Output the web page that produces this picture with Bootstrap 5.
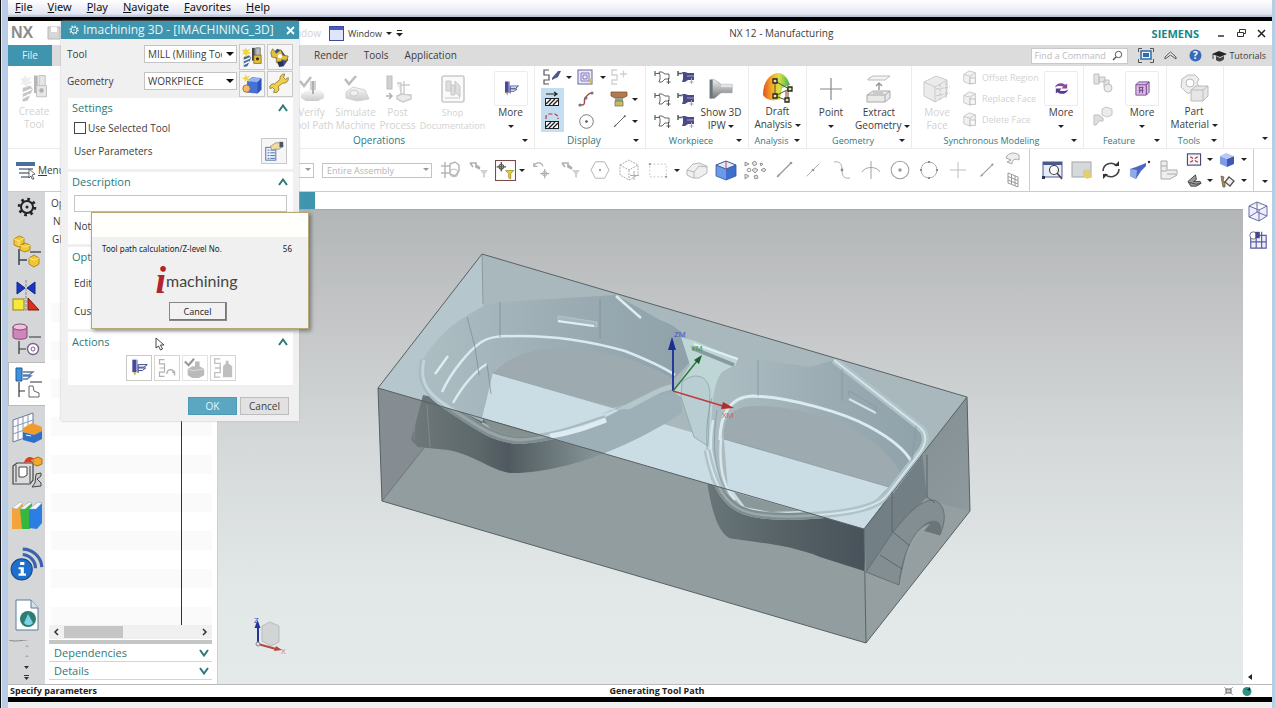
<!DOCTYPE html>
<html lang="en">
<head>
<meta charset="utf-8">
<meta name="viewport" content="width=device-width, initial-scale=1">
<title>NX 12 - Manufacturing</title>
<link href="https://cdn.jsdelivr.net/npm/bootstrap@5.3.0/dist/css/bootstrap.min.css" rel="stylesheet">
<script src="https://cdn.jsdelivr.net/npm/bootstrap@5.3.0/dist/js/bootstrap.bundle.min.js"></script>
<style>
:root{--teal:#3f94ae;--ink:#3c3c3c;--green:#2b7a78}
body{font-family:"Open Sans","Noto Sans",sans-serif;font-size:10px;line-height:13px;color:var(--ink);background:#f0f0f0;overflow:hidden}
button,a{color:inherit;text-decoration:none;font:inherit}
button{border:0;background:none;padding:0}
svg{display:block;flex:none}
.edge-l{width:8px;background:linear-gradient(90deg,#111 0 1px,#e8eef6 1px 2px,#b9cde6 2px)}
.edge-r{width:3px;background:#b6cfe4}
.menubar{height:17px;font-family:"Noto Sans",sans-serif;font-size:11px;line-height:14px;color:#111;background:linear-gradient(#fff,#e3e6f2 14px,#b9c4d6 16px);padding-left:7px;gap:15px}
.menubar a::first-letter{text-decoration:underline}
.band-t{height:4px;background:#000}
.band-b{height:5px;background:#000}
.foot{height:6px;background:#f0f0f0}
.titlebar{height:24px;background:#fff}
.nxlogo{width:27px;font:bold 16px/20px "Liberation Sans",sans-serif;color:#8c8c8c;margin-left:3px}
.brand{color:#16868a;font-size:11px;font-weight:700;margin:0 18px 0 48px}
.tabbar{height:21px;background:#dcdcdc}
.filetab{width:44px;background:var(--teal);color:#e6f3f7;text-align:center}
.tab-b{font-size:10px}
.findbox{width:97px;height:16px;border:1px solid #c9c9c9;background:#fff}
.findbox input{border:0;outline:0;background:none;font-size:9px;width:78px;padding:0 2px;color:#777}
.findbox input::placeholder{color:#bcbcbc;opacity:1}
.caret{width:0;height:0;border:3px solid transparent;border-top:3px solid #222;border-bottom:0;display:inline-block;vertical-align:middle;flex:none}
.ribbon{height:83px;background:#fff;border-bottom:1px solid #ececec}
.rgroup{border-right:1px solid #ececec;flex:none}
.rbody{height:67px}
.rlabel{height:15px;color:#32787f}
.rlabel span.caret{margin-right:6px}
.big{text-align:center;padding-top:4px;flex:none;white-space:nowrap}
.big .pic{height:35px;display:flex;align-items:center;justify-content:center}
.ghost{color:#d2d2d2}
.ghost svg,.pale{opacity:.38;filter:grayscale(1)}
.soft svg{opacity:.6}
.framed{border:1px solid #ececec;border-radius:2px;width:34px;margin:auto}
.igrid{display:grid;grid-template-rows:repeat(3,22px);align-items:center;justify-items:center}
.on{background:#c3def0;width:23px;height:22px;display:flex;align-items:center;justify-content:center}
.w-op{width:307px}.w-di{width:111px}.w-wp{width:103px}.w-an{width:58px}.w-ge{width:105px}.w-sy{width:172px}.w-fe{width:83px}.w-to{width:57px}
.selbar{height:43px;background:#fff;border-bottom:1px solid #ccc}
.tool{width:29px;flex:none;display:flex;justify-content:center}
.tool.narrow{width:24px}
.gapc{width:10px;text-align:center;display:flex;justify-content:center;flex:none}
.pick{position:relative;display:block;flex:none}
.pick select{appearance:none;width:100%;height:100%;border:1px solid #c4c4c4;background:#fff;padding:0 14px 0 3px;font-size:10px;line-height:14px;color:var(--ink);border-radius:0;display:block}
.pick::after{content:"";position:absolute;right:3px;top:50%;margin-top:-2px;border:4px solid transparent;border-top:4px solid #111;border-bottom:0}
.pick.dim select{color:#b5b5b5}
.pick.dim::after{border-top-color:#999;border-width:3px;border-bottom:0}
.resbar{width:37px;background:#d5d6d8}
.resbar button{height:44px;display:flex;align-items:center;justify-content:center;width:37px}
.resbar .sel{background:#fff;border:1px solid #bbb;border-right:0}
.navi{width:173px;background:#fff;border-right:1px solid #cfcfcf}
.rowlist{background:repeating-linear-gradient(#fff 0 19px,#fafafa 19px 38px);margin:0 5px 0 6px;flex:1}
.rowlist .split{width:131px;border-right:1px solid #333;height:100%}
.hscroll{height:14px;background:#f0f0f0;margin:0 5px 0 4px}
.hscroll i{width:59px;background:#c5c5c5;height:12px;margin-left:5px}
.fold{height:18px;margin:0 5px 0 4px;border-bottom:1px solid #ccd9db;color:var(--green);font-size:11px;line-height:16px;padding:0 3px 0 5px}
.strip{height:18px;background:#fff;border-bottom:1px solid #8fb3bb}
.strip i{width:97px;background:var(--teal)}
.scene{background:linear-gradient(#b3b6b7,#c3c5c6 22%,#d5d9d9 50%,#e2e7e7 80%,#e4e9e9);flex:1;min-height:0}
.scene svg{width:100%;height:100%}
.rtools{width:29px;background:#fff}
.status{height:13px;background:#fff;border-top:1px solid #bbb;font-size:9px;line-height:12px;font-weight:700;color:#222}
.dlg{position:absolute;left:61px;top:21px;width:238px;background:#f0f0f0;box-shadow:0 0 2px #bbb;z-index:3}
.dlg h1{height:18px;background:var(--teal);color:#eaf6fa;font-size:12px;line-height:18px;margin:0;font-weight:400}
.dlg .sq{width:26px;height:26px;border:1px solid #c8c8c8;background:#f6f6f6;display:flex;align-items:center;justify-content:center;flex:none}
.frow{display:flex;gap:2px;margin:0 5px 1px 6px}
.frow label{width:75px;line-height:20px;flex:none}
.frow .pick{width:93px;height:18px;margin-top:1px}
.panel{background:#fff;margin:0 6px 3px 7px;padding:0 6px}
.panel h2{font-size:11px;line-height:20px;margin:0 -2px;color:var(--green);font-weight:400;padding-right:1px}
.dlg label,.dlg .t{font-size:10px}
.dlg input[type=checkbox]{appearance:none;width:12px;height:12px;border:1px solid #444;margin:0;background:#fff}
.desc{width:213px;height:17px;border:1px solid #c4c4c4}
.okb{width:49px;height:18px;background:#5ba6c1;color:#e9f6fb;border:1px solid #4c9ab6}
.cab{width:49px;height:18px;background:#e1e1e1;border:1px solid #bdbdbd}
.prog{position:absolute;left:91px;top:212px;width:218px;height:117px;background:#f0f0f0;border:1px solid #b7a678;box-shadow:2px 2px 4px #0006;z-index:4;color:#222;font-size:9px}
.prog .cap{height:24px;background:#fffffb}
.prog .line{font-family:"Noto Sans",sans-serif;font-size:8px;line-height:12px}
.im-i{font:italic bold 38px/26px "Liberation Serif",serif;color:#b3232c}
.im-t{font:16px/25px "Lato",sans-serif;color:#444}
.prog .cbtn{width:58px;height:19px;background:#f2f2f2;border:1px solid #888;box-shadow:inset -1px -1px #777}
.ptr{position:absolute;left:155px;top:337px;z-index:5}
</style>
</head>
<body>
<svg width="0" height="0" class="position-absolute" aria-hidden="true">
<defs>
<linearGradient id="gr" x2="0" y2="1"><stop offset="0" stop-color="#eee"/><stop offset="1" stop-color="#777"/></linearGradient>
<linearGradient id="hot"><stop offset="0" stop-color="#e2501e"/><stop offset=".35" stop-color="#f4b028"/><stop offset=".6" stop-color="#d8e04a"/><stop offset="1" stop-color="#3cae4a"/></linearGradient>
<symbol id="gear" viewBox="0 0 20 20"><circle cx="10" cy="10" r="6" fill="none" stroke="currentColor" stroke-width="2"/><circle cx="10" cy="10" r="7.8" fill="none" stroke="currentColor" stroke-width="3" stroke-dasharray="2.6 3.53"/><circle cx="10" cy="10" r="1.5" fill="currentColor"/></symbol>
<symbol id="up" viewBox="0 0 10 8"><path d="M1 7 5 1.5 9 7" fill="none" stroke="currentColor" stroke-width="2"/></symbol>
<symbol id="drill" viewBox="0 0 24 24"><path d="M3 12l6-2 2 3-4 9-4 1z" fill="#4a6a9a"/><path d="M3 16l7-3M3 20l6-3" stroke="#fff" stroke-width="1.500"/><path d="M5 1l1 3 4-1-2 3 3 2-4 1-1 3-2-3-3 0 2-2-2-3 3 0z" fill="#f1d542"/><path d="M12 2h3v14h-3z" fill="#444"/><path d="M16 2h5v16h-5z" fill="#b9bcc0" stroke="#555" stroke-width=".7"/><path d="M14 10h8v9h-8z" fill="#e9c136" stroke="#77601a" stroke-width=".8"/><circle cx="18" cy="14" r="1.800" fill="#333"/></symbol>
<symbol id="toolwrench" viewBox="0 0 24 24"><path d="M3 9l6-6 5 2 7 10-5 7-5-5z" fill="#3c4f8c"/><path d="M4 3l4 5 5-4 2 6 6 1-2 5-5-1-2 5-4-2 0-5-5-1-1-5z" fill="#e2c041" stroke="#6b5b1a" stroke-width=".7"/><path d="M9 17l6 0 1 5-5 1z" fill="#26335f"/><circle cx="12" cy="11" r="2.400" fill="#fff"/></symbol>
<symbol id="cubeball" viewBox="0 0 24 24"><path d="M7 9l5-4 10 1v12l-4 4-11-1z" fill="#4472d8" stroke="#2a4aa0" stroke-width=".6"/><path d="M7 9l5-4 10 1-4 4z" fill="#90b4f4"/><path d="M18 10l4-4v12l-4 4z" fill="#2d55b7"/><circle cx="6" cy="17" r="4" fill="#f1bd67" stroke="#b5622d"/><path d="M5 1l1 3 4-1-2 3 2 3-4-1-2 2 0-3-3-1 3-2z" fill="#f3d845"/></symbol>
<symbol id="wrench" viewBox="0 0 24 24"><path d="M21 5a5 5 0 0 1-6 6l-5 4a4 4 0 0 1-5 6l1-3-2-2-3 1a4 4 0 0 1 5-5l6-5a5 5 0 0 1 5-6l-1 4 2 2z" fill="#f0cf4c" stroke="#7d6a20" stroke-width=".8"/></symbol>
<symbol id="handlist" viewBox="0 0 24 24"><rect x="3" y="8" width="11" height="14" fill="#eef3fb" stroke="#4d6ba8"/><path d="M5 11h2M5 14h2M5 17h2M5 20h2M8 11h5M8 14h5M8 17h5M8 20h5" stroke="#3d62b0"/><path d="M8 7l6-4h5l3 3-4 4h-4l-4 1z" fill="#f0dba6" stroke="#8a774a" stroke-width=".7"/><rect x="18" y="2" width="4" height="6" fill="#4a5568"/></symbol>
<symbol id="op" viewBox="0 0 24 24"><path d="M4 2h5v15H4z" fill="#4a4a9c"/><path d="M9 2h1.500v15H9z" fill="#9393cf"/><path d="M5 17l4 0-2 4z" fill="#c9b93c"/><path d="M11 8h11l-4 3h-7M11 12h9l-4 3h-5M11 8v10" fill="none" stroke="#3d4a8c" stroke-width="1.200"/></symbol>
<symbol id="regen" viewBox="0 0 24 24"><path d="M9 2H3v5h6v5H3M9 12v5H3v5h6" fill="none" stroke="#999" stroke-width="1.400"/><path d="M12 19a4.500 4.500 0 0 1 9-1M21 21v-4h-3" fill="none" stroke="#999" stroke-width="1.800"/></symbol>
<symbol id="verify" viewBox="0 0 28 28"><path d="M2 6l4 5 7-9" fill="none" stroke="#555" stroke-width="2.600"/><path d="M12 6h6v12h-6z" fill="#888"/><path d="M3 19l7-4h12l4 3v5l-6 3H8l-5-3z" fill="url(#gr)"/><path d="M14 6h2v13h-2z" fill="#333"/></symbol>
<symbol id="vbox" viewBox="0 0 24 24"><path d="M1 5l4 4 6-7" fill="none" stroke="#333" stroke-width="2.400"/><path d="M4 13l5-3h3V5h5v5l5 3v7l-6 3H9l-5-3z" fill="#777"/><path d="M4 13l6 2 12-2" fill="none" stroke="#bbb"/></symbol>
<symbol id="sim" viewBox="0 0 28 28"><path d="M3 4l4 5 7-8" fill="none" stroke="#555" stroke-width="2.600"/><path d="M4 17l7-5 12 3 4 9-12 2-11-3z" fill="url(#gr)" stroke="#888"/><ellipse cx="12" cy="18" rx="4" ry="3" fill="#ddd" stroke="#777"/></symbol>
<symbol id="post" viewBox="0 0 28 28"><rect x="3" y="1" width="5" height="13" fill="#888" stroke="#555"/><path d="M2 21h6M5 18l3 3-3 3" fill="none" stroke="#333" stroke-width="1.500"/><path d="M13 8h4v12M20 6v14M17 10h9M13 21l5-2 9 1v4l-8 3-6-3z" fill="#ccc" stroke="#777" stroke-width="1.400"/></symbol>
<symbol id="doc" viewBox="0 0 28 28"><rect x="3" y="1" width="22" height="26" rx="2" fill="#f4f4f4" stroke="#777" stroke-width="1.600"/><path d="M7 6h5v10H7zM12 10h4v10h-4zM16 6l5 5v11l-5-5zM6 23h15" fill="#aaa" stroke="#777"/></symbol>
<symbol id="path1" viewBox="0 0 20 18"><path d="M7 2H2v5h5v5H2v4h5" fill="none" stroke="#555" stroke-width="1.200"/><path d="M10 10l6-7 3 0-3 6-6 3z" fill="#4b5a8a"/></symbol>
<symbol id="grid1" viewBox="0 0 20 18"><rect x="2" y="2" width="14" height="14" fill="#ebe9f7" stroke="#6a62a0"/><path d="M5 5h8v8H5zM7 7h4v4H7z" fill="none" stroke="#8278bd"/><path d="M13 10l5 2-3 1 2 3-4-2z" fill="#d3bd42"/></symbol>
<symbol id="pathx" viewBox="0 0 20 18"><path d="M8 2H3v5h5v5H3v4h5M11 6h7M14.500 2.500v7" fill="none" stroke="#888" stroke-width="1.400"/></symbol>
<symbol id="hatch" viewBox="0 0 18 18"><path d="M3 4h10M11 2l3 2-3 2" fill="none" stroke="#222" stroke-width="1.200"/><rect x="2.500" y="8.500" width="13" height="7" fill="#fff" stroke="#222"/><path d="M3 14l5-5M6 15l6-6M10 15l5-5" stroke="#222" stroke-width="1.400"/></symbol>
<symbol id="hatch2" viewBox="0 0 18 18"><path d="M3 7V4l3-2h6l3 2v3" fill="none" stroke="#b73a3a" stroke-width="1.200" stroke-dasharray="4 2"/><rect x="2.500" y="9.500" width="13" height="7" fill="#fff" stroke="#222"/><path d="M3 15l5-5M6 16l6-6M10 16l5-5" stroke="#222" stroke-width="1.400"/></symbol>
<symbol id="curve" viewBox="0 0 18 18"><path d="M3 15c8 1 2-6 6-8 2-2 2-4 6-4" fill="none" stroke="#a34a52" stroke-width="1.500"/><circle cx="3" cy="15" r="1.600" fill="#777"/><circle cx="9" cy="8" r="1.600" fill="#777"/><circle cx="15" cy="3" r="1.600" fill="#777"/></symbol>
<symbol id="mush" viewBox="0 0 18 18"><path d="M1 2h16v4l-4 2H5L1 6z" fill="#b57a4a" stroke="#764822" stroke-width=".7"/><path d="M5 8h8v3H5z" fill="#94a39a"/><path d="M5 11h8v5H5z" fill="#c9ba5b" stroke="#6b6a4a" stroke-width=".7"/></symbol>
<symbol id="circ" viewBox="0 0 20 20"><circle cx="10" cy="10" r="8" fill="none" stroke="#666"/><circle cx="10" cy="10" r="1.600" fill="#555"/></symbol>
<symbol id="linea" viewBox="0 0 20 20"><path d="M3 17 17 3" stroke="#555" stroke-width="1.200"/><circle cx="17" cy="3" r="1.300" fill="#555"/><path d="M3 17l3-1-2-2z" fill="#555"/></symbol>
<symbol id="lineb" viewBox="0 0 20 20"><path d="M3 17 17 3" stroke="#666"/><circle cx="10" cy="10" r="1.500" fill="#555"/></symbol>
<symbol id="wpo" viewBox="0 0 18 16"><path d="M1 2v5M1 4.500h4" stroke="#3f6b62" stroke-width="1.200"/><path d="M5 3l1 3v4l-1 3h3l3-3h4V5h-4L8 3z" fill="#fff" stroke="#666"/><path d="M14.500 9v6M12.500 13h4" stroke="#555"/></symbol>
<symbol id="wpf" viewBox="0 0 18 16"><path d="M1 2v5M1 4.500h4" stroke="#3f6b62" stroke-width="1.500"/><path d="M5 3l1 3v4l-1 3h3l3-2h6V4h-6L8 3z" fill="#4b4a86"/><path d="M10 7h7M14.500 9v6M12.500 13h4" stroke="#a5a3d0"/></symbol>
<symbol id="ipw" viewBox="0 0 28 24"><path d="M2 2h5l7 5h12v9H14l-7 6H2z" fill="url(#gr)" stroke="#88949a" stroke-width=".6"/><path d="M2 2h3v20H2z" fill="#66757c"/><path d="M14 7h12v3H14z" fill="#dde6ea"/></symbol>
<symbol id="draft" viewBox="0 0 32 32"><path d="M1 23C1 8 9 1 17 1c6 1 9 6 11 12l-8 3-2 11C12 30 4 28 1 23z" fill="url(#hot)"/><path d="M13 9l14 8M13 24l14-7M13 9v15l11 4M26 17v10" fill="none" stroke="#445a2a"/><path d="M11 7h4v4h-4zM11 22h4v4h-4zM26 15h4v4h-4zM23 26h4v4h-4z" fill="#e9e1a0" stroke="#222" stroke-width="1.300"/><path d="M24 19v6" stroke="#b02323"/></symbol>
<symbol id="cross" viewBox="0 0 24 24"><path d="M12 1v22M1 12h22" stroke="#888" stroke-width="1.200"/></symbol>
<symbol id="extract" viewBox="0 0 28 30"><path d="M3 5l5-3h17l-5 4H3z" fill="#f3f3f3" stroke="#bbb"/><path d="M14 16v-6M11 12l3-3 3 3" fill="none" stroke="#999" stroke-width="1.500"/><path d="M2 21l6-4h17v7l-5 4H2z" fill="#e9e9e9" stroke="#aaa"/><path d="M2 21h18v7M20 21l5-4M8 19h10" fill="none" stroke="#aaa"/></symbol>
<symbol id="cubeface" viewBox="0 0 30 30"><path d="M2 8l12-6 11 4v15l-12 7-11-6z" fill="#ccc" stroke="#777"/><path d="M2 8l11 5 12-7M13 13v15" fill="none" stroke="#777"/><path d="M18 10v16M24 8v16M14 15l14-2M14 22l14-3" stroke="#666" stroke-dasharray="3 1.500"/></symbol>
<symbol id="smallface" viewBox="0 0 18 18"><path d="M2 5l6-4 7 2v10l-6 3-7-3z" fill="#ddd" stroke="#666"/><path d="M2 5l7 2 6-4M9 7v9" fill="none" stroke="#666"/><rect x="9" y="9" width="6" height="6" fill="#eee" stroke="#555"/></symbol>
<symbol id="swap" viewBox="0 0 18 18"><path d="M2 8c1-5 8-6 11-3l2-1v5h-6l2-2C8 6 5 6 2 8z" fill="#8a4aa0"/><path d="M16 10c-1 5-8 6-11 3l-2 1V9h6l-2 2c3 1 6 1 9-1z" fill="#5c3a88"/></symbol>
<symbol id="purp" viewBox="0 0 18 18"><path d="M2 5l3-3h11v11l-3 3H2z" fill="#d9bce2" stroke="#7b4f96"/><path d="M2 5h11v11M13 5l3-3M5 8h5M5 11h5M6 7v7M9 7v7" fill="none" stroke="#7b4f96" stroke-width="1.200"/></symbol>
<symbol id="feat1" viewBox="0 0 22 22"><path d="M2 2h5v10H2zM7 5h6v5H7zM12 8h5v7h-5z" fill="#bbb" stroke="#555"/><circle cx="16" cy="16" r="4" fill="#ccc" stroke="#555"/></symbol>
<symbol id="feat2" viewBox="0 0 22 22"><path d="M2 10h5l4 3v3l-4 0-3 4H2z" fill="#aaa" stroke="#555"/><path d="M10 4l4-2 6 2v6l-5 2-5-2z" fill="#ccc" stroke="#666"/></symbol>
<symbol id="mat" viewBox="0 0 30 30"><path d="M16 2l4 4-2 4 2 4-5 6H8L2 14 3 6l6-4z" fill="#ededed" stroke="#bbb"/><circle cx="11" cy="10" r="4" fill="#fff" stroke="#bbb"/><path d="M12 17l5-4h12v10l-5 5H12z" fill="#e6e6e6" stroke="#bbb"/><path d="M12 17h12v11M24 17l5-4" fill="none" stroke="#bbb"/></symbol>
<symbol id="snapg" viewBox="0 0 22 20"><path d="M6 2v16M2 6h9M2 13h9M11 4l5-2 4 3v6l-4 5-5-2z" fill="none" stroke="#444" stroke-width="1.500"/><circle cx="15" cy="13" r="4" fill="none" stroke="#555"/></symbol>
<symbol id="filt" viewBox="0 0 22 20"><path d="M2 3h6v4l4 2M8 5l4 3M2 3l3 4" fill="none" stroke="#333" stroke-width="1.700"/><path d="M12 10h8l-3 4v4l-2-1v-3z" fill="#888"/></symbol>
<symbol id="snapf" viewBox="0 0 20 20"><rect x=".5" y=".5" width="19" height="19" fill="#fff" stroke="#7d4a4a"/><path d="M6 2v9M1.500 6.500h9" stroke="#555" stroke-width="1.200"/><circle cx="6" cy="6.500" r="2.200" fill="none" stroke="#555"/><path d="M10 10h8l-3 3v5l-2-1v-4z" fill="#e6cc2c" stroke="#8c7a18" stroke-width=".6"/></symbol>
<symbol id="undo1" viewBox="0 0 22 20"><path d="M2 6c2-5 9-5 10 0M2 2v4h4M14 9v10M9 14h10" fill="none" stroke="#777" stroke-width="1.300"/><circle cx="14" cy="14" r="2.500" fill="none" stroke="#777"/></symbol>
<symbol id="hex" viewBox="0 0 22 20"><path d="M6 1h10l5 9-5 9H6l-5-9z" fill="none" stroke="#777"/><circle cx="11" cy="10" r="1.300" fill="#666"/></symbol>
<symbol id="dcube" viewBox="0 0 22 22"><path d="M2 6l9-5 9 5v10l-9 5-9-5zM2 6l9 5 9-5M11 11v10" fill="none" stroke="#777" stroke-dasharray="2 1"/><path d="M16 12v9M12 16.500h9" stroke="#777"/></symbol>
<symbol id="drect" viewBox="0 0 22 20"><rect x="2" y="3" width="18" height="14" fill="none" stroke="#999" stroke-dasharray="2 2"/><circle cx="2" cy="3" r="1.200" fill="#555"/><circle cx="20" cy="17" r="1.200" fill="#555"/></symbol>
<symbol id="blob" viewBox="0 0 22 20"><path d="M1 10l6-6 6-1 8 3v7l-8 5-6 0-6-3z" fill="#e6e6e6" stroke="#888"/><path d="M1 10l7 2 5-6 8 1M8 12v6" fill="none" stroke="#888"/></symbol>
<symbol id="bcube" viewBox="0 0 22 22"><path d="M1 6l10 4v11L1 17z" fill="#6b9be8"/><path d="M11 10l10-4v11l-10 4z" fill="#3d6fcf"/><path d="M1 6l10-4 10 4-10 4z" fill="#dfeafc" stroke="#38549a"/><path d="M11 2v8" stroke="#c44"/><path d="M1 6v11l10 4 10-4V6" fill="none" stroke="#38549a" stroke-width=".8"/></symbol>
<symbol id="pts" viewBox="0 0 24 20"><path d="M2 2l4 2-4 2zM9 3l3-2 2 3-3 2zM2 14l4 2-4 3zM9 10l3-2 3 2-3 3zM18 10l3-2 2 2-2 2zM11 16l3-1 1 3-3 1zM17 3l3 1-2 2z" fill="#ccc" stroke="#444" stroke-width=".9"/><circle cx="6" cy="10" r="1.800" fill="#eee" stroke="#444" stroke-width=".9"/></symbol>
<symbol id="scurve" viewBox="0 0 20 20"><path d="M2 2c6-1 8 2 8 8s2 9 8 8" fill="none" stroke="#777"/><circle cx="10" cy="10" r="1.400" fill="#444"/></symbol>
<symbol id="arcx" viewBox="0 0 20 20"><path d="M1 12c3-6 15-6 18 0M10 1v18" fill="none" stroke="#666"/></symbol>
<symbol id="quad" viewBox="0 0 20 20"><circle cx="10" cy="10" r="8" fill="none" stroke="#777"/><path d="M9 1h2v2H9zM9 17h2v2H9zM1 9h2v2H1zM17 9h2v2h-2z" fill="#444"/></symbol>
<symbol id="sheet" viewBox="0 0 16 16"><path d="M3 1l10 4v10L3 11zM3 4.500l10 4M3 8l10 4M6.500 2v10M10 4v10" fill="none" stroke="#999"/></symbol>
<symbol id="surf" viewBox="0 0 16 16"><path d="M1 6c2-6 9-6 13-3v5c-4-2-7 0-7 4l-5-2 4-2z" fill="#eee" stroke="#aaa"/></symbol>
<symbol id="zoomw" viewBox="0 0 22 20"><rect x="1" y="2" width="19" height="15" fill="#e9edf8" stroke="#4b5a9a"/><path d="M1 2h19v3H1z" fill="#4b5a8a"/><circle cx="12" cy="10" r="4.500" fill="#fff" stroke="#444" stroke-width="1.200"/><path d="M15 13l5 6" stroke="#444" stroke-width="1.500"/><path d="M0 16h3v3H0z" fill="#335"/></symbol>
<symbol id="pal" viewBox="0 0 22 20"><rect x="1" y="2" width="19" height="15" fill="#d5d9dc" stroke="#a2a8ad"/><path d="M12 10l6-1 3 8-5 2-4-3z" fill="#e0cf75"/></symbol>
<symbol id="rot" viewBox="0 0 22 20"><path d="M3 11a8 8 0 0 1 14-5M19 9a8 8 0 0 1-14 5" fill="none" stroke="#444" stroke-width="1.600"/><path d="M14 6h5V1zM8 14H3v5z" fill="#333"/></symbol>
<symbol id="persp" viewBox="0 0 22 20"><path d="M1 9l6-2 10-4v3l-5 5-5 8-6-3z" fill="#4b66c4"/><path d="M1 9l7 1-1 9-6-3z" fill="#92aae8"/><circle cx="20" cy="2" r="1.200" fill="#333"/></symbol>
<symbol id="lshape" viewBox="0 0 22 20"><path d="M3 1h6v9l10 0v5l-7 4H3zM3 6h6M3 11h6M9 14h9" fill="#eee" stroke="#aaa"/></symbol>
<symbol id="fit" viewBox="0 0 16 16"><rect x="1" y="2" width="14" height="12" fill="#f3f3fa" stroke="#444a7a" stroke-width="1.200"/><path d="M4 5l3 2M12 5L9 7M4 11l3-2M12 11L9 9" stroke="#b33" stroke-width="1.200"/></symbol>
<symbol id="bc2" viewBox="0 0 16 16"><path d="M1 4l7 3v8l-7-3z" fill="#7e9ae8"/><path d="M8 7l7-3v8l-7 3z" fill="#3e58b8"/><path d="M1 4l6-3 8 3-7 3z" fill="#b7c8f6"/></symbol>
<symbol id="clip" viewBox="0 0 16 16"><path d="M1 9l8-7 1 5-3 2 7 0 1 2-5 3H4z" fill="#999" stroke="#444"/><path d="M2 10l8 2 5-1" fill="none" stroke="#444"/></symbol>
<symbol id="bolt" viewBox="0 0 16 16"><path d="M2 3l3 1-1 4 2 1v5H4l-1-5z" fill="#b48b42" stroke="#555" stroke-width=".7"/><path d="M10 4l5 4-4 5-5-4z" fill="#eee" stroke="#555" stroke-width="1.300"/></symbol>
<symbol id="asm" viewBox="0 0 32 34"><path d="M8 14v16M8 25h8" stroke="#345" stroke-width="1.500"/><path d="M3 4l5-3 5 2v6l-5 3-5-2zM9 10l5-2 5 2v5l-5 2-5-2z" fill="#f2c832" stroke="#b58a1a"/><path d="M18 23l5-3 5 3v6l-5 3-5-3z" fill="#f2c832" stroke="#b58a1a"/><path d="M3 4l5 2 5-3M8 6v5M9 10l5 2 5-2M18 23l5 2 5-2" fill="none" stroke="#fbe98c"/><path d="M19 17h11" stroke="#333" stroke-width="1.200"/></symbol>
<symbol id="cons" viewBox="0 0 32 34"><path d="M6 3v12l8-6zM24 3v12l-8-6z" fill="#1a35c4" stroke="#102a88"/><path d="M15 1v32" stroke="#888" stroke-dasharray="3 1"/><rect x="2" y="20" width="11" height="11" fill="#f8e838" stroke="#93851a"/><path d="M17 19l11 12H17z" fill="#d8321e" stroke="#7c1810"/></symbol>
<symbol id="part" viewBox="0 0 32 34"><path d="M2 4v10c0 3 14 3 14 0V4z" fill="#cf86b8" stroke="#84476f"/><ellipse cx="9" cy="4" rx="7" ry="3" fill="#edc1df" stroke="#84476f"/><path d="M8 18v13M8 26h7M18 14h12" stroke="#333" stroke-width="1.200"/><circle cx="22" cy="26" r="5.500" fill="#fff" stroke="#7d5f8c" stroke-width="1.400"/><circle cx="22" cy="26" r="2" fill="none" stroke="#7d5f8c"/></symbol>
<symbol id="opn" viewBox="0 0 32 34"><path d="M5 1h6v13H5z" fill="#3f93d8" stroke="#1e5c98"/><path d="M12 5h10l-4 3h-6M12 9h8l-4 3h-4" fill="none" stroke="#5a7ba8" stroke-width="1.300"/><path d="M8 15v15M8 24h6M19 15h12" stroke="#333" stroke-width="1.200"/><path d="M18 19h4l1 5 5 2v4H18z" fill="#fff" stroke="#666"/></symbol>
<symbol id="tbl" viewBox="0 0 32 34"><path d="M2 9l20-7v22L2 31z" fill="#fafcff" stroke="#6a7a98"/><path d="M2 16l20-7M2 23l20-7M7 7v22M12 6v22M17 4v22" stroke="#8a98b0"/><path d="M12 17l9-5 10 4v4l-8 4-11-3z" fill="#f29a2a"/><path d="M12 21l11 3 8-4v8l-8 4-11-3z" fill="#2f70c8"/><path d="M15 24l5 1" stroke="#fff"/></symbol>
<symbol id="mach" viewBox="0 0 32 34"><path d="M2 11l4-3h16v17l-3 4H2z" fill="#ddd" stroke="#444" stroke-width="1.200"/><path d="M8 12h8v8l-3 2H8zM19 11v17M5 10v17" fill="#fff" stroke="#444"/><path d="M13 8c1-6 7-8 10-4l-3 1 2 3-4-1z" fill="#e23c1e"/><path d="M22 4l5-2 4 2v5l-5 2-4-2z" fill="#f3a92d" stroke="#b06d12"/><path d="M25 19l5-1v3l-4 3 4 4v3l-9 1 3-4z" fill="#ccc" stroke="#444"/></symbol>
<symbol id="books" viewBox="0 0 32 34"><path d="M1 9l8-6 3 2-1 25H1z" fill="#f2a33a"/><path d="M9 10l9-7 3 2-2 25h-8z" fill="#36b83c"/><path d="M18 10l9-7 4 1v20l-5 6-8-1z" fill="#2b7fe2"/><path d="M1 9l8-6 3 1-6 6zM9 10l9-7 3 1-7 6zM18 10l9-7 4 1-6 6z" fill="#f4f8fc" stroke="#9ab" stroke-width=".5"/></symbol>
<symbol id="info" viewBox="0 0 32 34"><circle cx="11" cy="22" r="10" fill="#1f6fcc" stroke="#114a94"/><path d="M9.500 15h4v3h-4zM8 20h5v6h2v2H8v-2h2v-4H8z" fill="#fff"/><path d="M12 8a13 13 0 0 1 12 13M12 3a18 18 0 0 1 18 17" fill="none" stroke="#3c62ae" stroke-width="3"/></symbol>
<symbol id="web" viewBox="0 0 32 34"><path d="M5 2h15l7 8v22H5z" fill="#fff" stroke="#5d7a9c"/><path d="M20 2v8h7" fill="#d4e2f0" stroke="#5d7a9c"/><circle cx="17" cy="21" r="8" fill="#2b7f72"/><path d="M13 25l4-9 5 9c-3 3-6 3-9 0z" fill="#7ed0e8"/></symbol>
<symbol id="wcube" viewBox="0 0 22 22"><path d="M2 6l8-4 10 4v10l-8 5-10-4zM2 6l10 4 8-4M12 10v11M10 2v10M10 12l-8 5M10 12l10 4" fill="#eef" stroke="#6a6ca4"/></symbol>
<symbol id="wtab" viewBox="0 0 22 22"><path d="M3 6h17v14H3zM3 13h17M9 6v14M15 2v18" fill="#eef" stroke="#5a5d9c" stroke-width="1.300"/><circle cx="6" cy="6" r="4" fill="#fff" stroke="#667"/><path d="M8 2h5v7H8z" fill="#44478c"/></symbol>
</defs>
</svg>

<div class="d-flex vh-100 position-relative">
<div class="edge-l flex-shrink-0"></div>
<div class="flex-grow-1 d-flex flex-column" style="min-width:0">
<nav class="menubar d-flex flex-shrink-0" aria-label="Player">
<a href="#">File</a><a href="#">View</a><a href="#">Play</a><a href="#">Navigate</a><a href="#">Favorites</a><a href="#">Help</a>
</nav>
<div class="band-t flex-shrink-0"></div>

<header class="titlebar d-flex align-items-center flex-shrink-0">
<div class="nxlogo">NX</div>
<svg class="ms-2 pale" width="16" height="14" viewBox="0 0 16 14"><path d="M2 1h12v12H2z" fill="#999" stroke="#444"/><path d="M5 1h6v5H5z" fill="#fff"/></svg>
<div class="flex-shrink-0 text-end ghost" style="width:259px">Window</div>
<button class="d-flex align-items-center gap-1 ms-2"><svg width="15" height="15" viewBox="0 0 15 15"><rect x=".5" y=".5" width="14" height="14" fill="#dfe6fb" stroke="#3c4a9a"/><path d="M1 1h13v3H1z" fill="#4a5ac0"/></svg><span style="font-size:9px">Window</span><span class="caret"></span></button>
<svg class="ms-1" width="7" height="7" viewBox="0 0 7 7"><path d="M1 .5h5" stroke="#222"/><path d="M0 3h7L3.500 6.500z" fill="#222"/></svg>
<div class="flex-grow-1 text-center" style="padding-left:56px">NX 12 - Manufacturing</div>
<div class="brand">SIEMENS</div>
<button aria-label="Minimise"><svg width="8" height="10"><path d="M1 8h6" stroke="#333" stroke-width="1.500"/></svg></button>
<button class="ms-2 me-2 ps-1" aria-label="Restore"><svg width="9" height="9" viewBox="0 0 9 9"><path d="M2.500 3V.5h6v4H6M.5 3.500h6v4h-6z" fill="none" stroke="#333"/></svg></button>
<button style="margin:0 6px 0 3px" aria-label="Close"><svg width="9" height="9" viewBox="0 0 9 9"><path d="M1 1l7 7M8 1L1 8" stroke="#222" stroke-width="1.500"/></svg></button>
</header>

<div class="tabbar d-flex align-items-center flex-shrink-0">
<button class="filetab h-100">File</button>
<button class="tab-b" style="margin-left:262px">Render</button>
<button class="tab-b ms-3">Tools</button>
<button class="tab-b ms-3">Application</button>
<div class="findbox ms-auto d-flex align-items-center justify-content-between"><input type="text" placeholder="Find a Command" aria-label="Find a Command"><svg class="me-1" width="11" height="11" viewBox="0 0 11 11"><circle cx="6.500" cy="4.500" r="3.200" fill="none" stroke="#555"/><path d="M4 7l-3 3" stroke="#555" stroke-width="1.500"/></svg></div>
<button style="margin-left:10px" aria-label="Full screen"><svg width="16" height="15" viewBox="0 0 16 15"><path d="M.5 4V.5H4M12 .5h3.500V4M15.500 11v3.500H12M4 14.500H.500V11" fill="none" stroke="#555"/><rect x="3" y="3" width="10" height="8" fill="#eaf2fb" stroke="#2f6ca8" stroke-width="1.500"/><path d="M5 5h6v4H5z" fill="#2f6ca8"/></svg></button>
<button style="margin-left:10px" aria-label="Collapse ribbon"><svg width="13" height="9" viewBox="0 0 13 9"><path d="M1 6l5.500-5L12 6v2l-5.500-4L1 8z" fill="#eee" stroke="#555"/></svg></button>
<button class="ms-2 ps-1" aria-label="Help"><svg width="13" height="13" viewBox="0 0 13 13"><circle cx="6.500" cy="6.500" r="6" fill="#3a68b8"/><text x="6.500" y="10" text-anchor="middle" font-size="10" font-weight="700" fill="#fff">?</text></svg></button>
<button class="d-flex align-items-center" style="font-size:9px;margin:0 6px 0 10px;gap:2px"><svg width="15" height="12" viewBox="0 0 15 12"><path d="M0 4l7-3 8 3-7 3z" fill="#222"/><path d="M4 6v4c2 2 6 2 8-1V6L8 8z" fill="#444"/><path d="M1 4v5" stroke="#444"/></svg>Tutorials</button>
</div>

<div class="ribbon d-flex flex-shrink-0">
<div class="ghost flex-shrink-0" style="width:220px"><button class="big" style="width:52px"><span class="pic"><svg width="30" height="30"><use href="#drill"/></svg></span>Create<br>Tool</button></div>
<section class="rgroup w-op">
<div class="rbody d-flex justify-content-end">
<button class="big ghost" style="width:45px"><span class="pic"><svg width="28" height="28"><use href="#verify"/></svg></span>Verify<br>Tool Path</button>
<button class="big ghost" style="width:43px"><span class="pic"><svg width="28" height="28"><use href="#sim"/></svg></span>Simulate<br>Machine</button>
<button class="big ghost" style="width:41px"><span class="pic"><svg width="28" height="28"><use href="#post"/></svg></span>Post<br>Process</button>
<button class="big ghost" style="width:69px;font-size:9px"><span class="pic"><svg width="28" height="28"><use href="#doc"/></svg></span>Shop<br>Documentation</button>
<button class="big" style="width:47px"><span class="pic framed"><svg width="18" height="18"><use href="#op"/></svg></span>More<br><span class="caret"></span></button>
</div>
<div class="rlabel d-flex align-items-center"><span class="flex-grow-1 text-center ps-2">Operations</span><span class="caret"></span></div>
</section>
<section class="rgroup w-di">
<div class="rbody igrid ps-1" style="grid-template-columns:26px 8px 26px 8px 24px 8px;justify-content:start">
<button aria-label="Path display"><svg width="20" height="18"><use href="#path1"/></svg></button><span class="caret"></span><button aria-label="Grid"><svg width="20" height="18"><use href="#grid1"/></svg></button><span class="caret"></span><button class="pale" aria-label="Add path"><svg width="20" height="18"><use href="#pathx"/></svg></button><span></span>
<button class="on" aria-label="Hatch"><svg width="18" height="18"><use href="#hatch"/></svg></button><span></span><button aria-label="Curve"><svg width="18" height="18"><use href="#curve"/></svg></button><span></span><button aria-label="Holder"><svg width="18" height="18"><use href="#mush"/></svg></button><span class="caret"></span>
<button class="on" aria-label="Hatch trim"><svg width="18" height="18"><use href="#hatch2"/></svg></button><span></span><button aria-label="Centre"><svg width="17" height="17"><use href="#circ"/></svg></button><span></span><button aria-label="Line"><svg width="15" height="15"><use href="#linea"/></svg></button><span class="caret"></span>
</div>
<div class="rlabel d-flex align-items-center"><span class="flex-grow-1 text-center">Display</span><span class="caret"></span></div>
</section>
<section class="rgroup w-wp">
<div class="rbody d-flex">
<div class="igrid ps-1" style="grid-template-columns:25px 22px">
<button aria-label="Blank 1"><svg width="18" height="16"><use href="#wpo"/></svg></button><button aria-label="Solid 1"><svg width="18" height="16"><use href="#wpf"/></svg></button>
<button aria-label="Blank 2"><svg width="18" height="16"><use href="#wpo"/></svg></button><button aria-label="Solid 2"><svg width="18" height="16"><use href="#wpf"/></svg></button>
<button aria-label="Blank 3"><svg width="18" height="16"><use href="#wpo"/></svg></button><button aria-label="Solid 3"><svg width="18" height="16"><use href="#wpf"/></svg></button>
</div>
<button class="big" style="width:48px"><span class="pic"><svg width="26" height="24"><use href="#ipw"/></svg></span>Show 3D<br>IPW <span class="caret"></span></button>
</div>
<div class="rlabel d-flex align-items-center"><span class="flex-grow-1 text-center" style="font-size:9px">Workpiece</span><span class="caret"></span></div>
</section>
<section class="rgroup w-an">
<div class="rbody"><button class="big w-100"><span class="pic"><svg width="32" height="32"><use href="#draft"/></svg></span>Draft<br>Analysis <span class="caret"></span></button></div>
<div class="rlabel d-flex align-items-center"><span class="flex-grow-1 text-center" style="font-size:9px">Analysis</span><span class="caret"></span></div>
</section>
<section class="rgroup w-ge">
<div class="rbody d-flex"><button class="big" style="width:48px"><span class="pic"><svg width="24" height="24"><use href="#cross"/></svg></span>Point<br><span class="caret"></span></button><button class="big" style="width:48px"><span class="pic"><svg width="28" height="30"><use href="#extract"/></svg></span>Extract<br>Geometry <span class="caret"></span></button></div>
<div class="rlabel d-flex align-items-center"><span class="flex-grow-1 text-center" style="font-size:9px">Geometry</span><span class="caret"></span></div>
</section>
<section class="rgroup w-sy">
<div class="rbody d-flex"><button class="big ghost" style="width:50px"><span class="pic"><svg width="30" height="30"><use href="#cubeface"/></svg></span>Move<br>Face</button>
<div class="ghost" style="width:76px;padding-top:1px"><button class="d-flex align-items-center gap-1 text-nowrap" style="height:21px;font-size:9px"><svg width="16" height="16"><use href="#smallface"/></svg>Offset Region</button><button class="d-flex align-items-center gap-1 text-nowrap" style="height:21px;font-size:9px"><svg width="16" height="16"><use href="#smallface"/></svg>Replace Face</button><button class="d-flex align-items-center gap-1 text-nowrap" style="height:21px;font-size:9px"><svg width="16" height="16"><use href="#smallface"/></svg>Delete Face</button></div>
<button class="big" style="width:46px"><span class="pic framed"><svg width="17" height="17"><use href="#swap"/></svg></span>More<br><span class="caret"></span></button></div>
<div class="rlabel d-flex align-items-center"><span class="flex-grow-1 text-center text-nowrap" style="font-size:9px">Synchronous Modeling</span><span class="caret"></span></div>
</section>
<section class="rgroup w-fe">
<div class="rbody d-flex"><div class="pale d-flex flex-column justify-content-around ps-1" style="width:36px"><button class="ps-1" aria-label="Feature 1"><svg width="22" height="22"><use href="#feat1"/></svg></button><button class="ps-1" aria-label="Feature 2"><svg width="22" height="22"><use href="#feat2"/></svg></button></div><button class="big" style="width:44px"><span class="pic framed"><svg width="17" height="17"><use href="#purp"/></svg></span>More<br><span class="caret"></span></button></div>
<div class="rlabel d-flex align-items-center"><span class="flex-grow-1 text-center" style="font-size:9px">Feature</span><span class="caret"></span></div>
</section>
<section class="rgroup w-to">
<div class="rbody"><button class="big" style="width:54px"><span class="pic"><svg width="30" height="30"><use href="#mat"/></svg></span>Part<br>Material <span class="caret"></span></button></div>
<div class="rlabel d-flex align-items-center"><span class="flex-grow-1 text-center" style="font-size:9px">Tools</span><span class="caret"></span></div>
</section>
<div class="flex-grow-1 d-flex justify-content-end align-items-end pb-2 pe-1"><span class="caret"></span></div>
</div>

<div class="selbar d-flex align-items-center flex-shrink-0">
<button class="d-flex align-items-center ps-1 ms-1 flex-shrink-0" style="width:60px"><svg width="22" height="20" viewBox="0 0 22 20"><path d="M0 2h19v4H0z" fill="#4a6f9c"/><path d="M3 9h14M3 13h10M5 17h8" stroke="#8c9aa8" stroke-width="2"/><path d="M13 9l6 5-3 1 2 4-2 0-1-3-2 2z" fill="#fff" stroke="#333" stroke-width=".7"/></svg><span><u>M</u>enu</span></button>
<span class="pick dim" style="width:81px;height:15px;margin-left:161px"><select aria-label="Selection type"><option></option></select></span>
<span class="pick dim ms-2" style="width:110px;height:15px"><select class="ps-1" style="font-size:9px" aria-label="Scope"><option>Entire Assembly</option></select></span>
<button class="tool pale" style="margin-left:3px" aria-label="Snap"><svg width="22" height="20"><use href="#snapg"/></svg></button>
<button class="tool pale" aria-label="Filter"><svg width="22" height="20"><use href="#filt"/></svg></button>
<button class="tool narrow" aria-label="Snap filter"><svg width="21" height="21"><use href="#snapf"/></svg></button><span class="gapc"><span class="caret"></span></span>
<button class="tool soft" aria-label="Undo"><svg width="20" height="20"><use href="#undo1"/></svg></button>
<button class="tool pale" aria-label="Filter 2"><svg width="22" height="20"><use href="#filt"/></svg></button>
<button class="tool soft" aria-label="Hexagon"><svg width="20" height="20"><use href="#hex"/></svg></button>
<button class="tool soft" aria-label="Dashed cube"><svg width="22" height="22"><use href="#dcube"/></svg></button>
<button class="tool soft" aria-label="Rectangle"><svg width="20" height="19"><use href="#drect"/></svg></button><span class="gapc"><span class="caret"></span></span>
<button class="tool soft" aria-label="Body"><svg width="22" height="20"><use href="#blob"/></svg></button>
<button class="tool" aria-label="Shaded"><svg width="22" height="22"><use href="#bcube"/></svg></button>
<button class="tool soft" aria-label="Points"><svg width="24" height="20"><use href="#pts"/></svg></button>
<button class="tool soft" aria-label="End point"><svg width="20" height="20"><use href="#linea"/></svg></button>
<button class="tool soft" aria-label="Mid point"><svg width="18" height="18"><use href="#lineb"/></svg></button>
<button class="tool soft" aria-label="Spline"><svg width="20" height="20"><use href="#scurve"/></svg></button>
<button class="tool soft" aria-label="Intersection"><svg width="20" height="20"><use href="#arcx"/></svg></button>
<button class="tool soft" aria-label="Arc centre"><svg width="22" height="22"><use href="#circ"/></svg></button>
<button class="tool soft" aria-label="Quadrant"><svg width="20" height="20"><use href="#quad"/></svg></button>
<button class="tool soft" aria-label="Existing point"><svg width="18" height="18"><use href="#cross"/></svg></button>
<button class="tool soft" aria-label="Point on curve"><svg width="17" height="17"><use href="#linea"/></svg></button>
<div class="d-flex flex-column gap-1 flex-shrink-0" style="width:28px"><svg class="ms-1" width="16" height="16"><use href="#surf"/></svg><svg class="ms-1" width="16" height="16"><use href="#sheet"/></svg></div>
<div class="vr me-2 opacity-25"></div>
<button class="tool" aria-label="Zoom"><svg width="22" height="20"><use href="#zoomw"/></svg></button>
<button class="tool" aria-label="Pan"><svg width="22" height="20"><use href="#pal"/></svg></button>
<button class="tool" aria-label="Rotate"><svg width="22" height="20"><use href="#rot"/></svg></button>
<button class="tool" aria-label="Perspective"><svg width="22" height="20"><use href="#persp"/></svg></button>
<button class="tool" aria-label="Section"><svg width="22" height="20"><use href="#lshape"/></svg></button>
<div class="igrid flex-shrink-0" style="grid-template-columns:22px 10px 24px 10px;grid-template-rows:21px 21px"><svg width="16" height="15"><use href="#fit"/></svg><span class="caret"></span><svg width="16" height="16"><use href="#bc2"/></svg><span class="caret"></span><svg width="15" height="15"><use href="#clip"/></svg><span class="caret"></span><svg width="16" height="16"><use href="#bolt"/></svg><span class="caret"></span></div>
<div class="vr ms-1 opacity-25"></div>
<div class="ms-auto align-self-end pb-1 pe-1"><span class="caret"></span></div>
</div>

<div class="d-flex flex-grow-1" style="min-height:0">
<aside class="resbar flex-shrink-0 d-flex flex-column">
<button style="height:30px" class="mb-2 text-dark" aria-label="Options"><svg width="20" height="20"><use href="#gear"/></svg></button>
<button aria-label="Assembly Navigator"><svg width="32" height="34"><use href="#asm"/></svg></button>
<button aria-label="Constraint Navigator"><svg width="32" height="34"><use href="#cons"/></svg></button>
<button aria-label="Part Navigator"><svg width="32" height="34"><use href="#part"/></svg></button>
<button class="sel" aria-label="Operation Navigator"><svg width="32" height="34"><use href="#opn"/></svg></button>
<button aria-label="Machine Tool Navigator"><svg width="32" height="34"><use href="#tbl"/></svg></button>
<button aria-label="Machining Wizard"><svg width="32" height="34"><use href="#mach"/></svg></button>
<button aria-label="Reuse Library"><svg width="32" height="34"><use href="#books"/></svg></button>
<button style="height:52px" aria-label="HD3D"><svg width="34" height="36"><use href="#info"/></svg></button>
<button style="height:50px" aria-label="Web Browser"><svg width="32" height="34"><use href="#web"/></svg></button>
<svg width="37" height="44" viewBox="0 0 37 44"><path d="M1 0c8 3 20-2 33-1" fill="none" stroke="#888"/><path d="M17 7l2-2 2 2zM17 17l2-2 2 2z" fill="#aaa"/><path d="M16 26h5l-2.500 3zM16 37h5l-2.500 3zM16 35h5v1h-5z" fill="#333"/></svg>
</aside>
<aside class="navi flex-shrink-0 d-flex flex-column overflow-hidden">
<div class="ps-2 text-nowrap" style="line-height:18px">
<div style="margin-left:-2px;padding-top:2px">Op</div><div>N</div><div style="margin-left:-1px">GE</div><div style="height:26px"></div><div class="ms-1" style="line-height:10px">_</div></div>
<div class="rowlist"><div class="split"></div></div>
<div class="hscroll d-flex align-items-center"><svg class="ms-1" width="6" height="8"><path d="M5 1L2 4l3 3" fill="none" stroke="#333" stroke-width="1.500"/></svg><i></i><svg class="ms-auto me-1" width="6" height="8"><path d="M1 1l3 3-3 3" fill="none" stroke="#333" stroke-width="1.500"/></svg></div>
<div style="height:4px;background:#c4c6c6;margin:1px 5px 0 4px"></div>
<button class="fold d-flex justify-content-between align-items-center">Dependencies<svg width="10" height="8"><use href="#up" transform="rotate(180 5 4)"/></svg></button>
<button class="fold d-flex justify-content-between align-items-center mb-1">Details<svg width="10" height="8"><use href="#up" transform="rotate(180 5 4)"/></svg></button>
</aside>
<div class="flex-grow-1 d-flex flex-column" style="min-width:0">
<div class="strip d-flex flex-shrink-0"><i></i></div>
<main class="scene">
<svg viewBox="218 210 1025 474" role="img" aria-label="Glasses frame inside a transparent stock block">
<defs>
<linearGradient id="wall"><stop offset="0" stop-color="#adbec3"/><stop offset=".5" stop-color="#9cadb4"/><stop offset="1" stop-color="#8fa1a9"/></linearGradient>
<linearGradient id="dark1"><stop offset="0" stop-color="#6f787b"/><stop offset=".35" stop-color="#5c686a"/><stop offset=".5" stop-color="#50595f"/><stop offset=".62" stop-color="#5e6a6d"/><stop offset="1" stop-color="#8b999d"/></linearGradient>
<linearGradient id="dark2"><stop offset="0" stop-color="#6a777a"/><stop offset=".5" stop-color="#566266"/><stop offset="1" stop-color="#48525a"/></linearGradient>
<linearGradient id="right" x2="1" y2="1"><stop offset="0" stop-color="#7d8a8e"/><stop offset="1" stop-color="#909b9f"/></linearGradient>
<clipPath id="frontc"><path d="M378 388 864 529 866 643 382 501z"/></clipPath>
<path id="rimL" d="M424 360C418 385 432 396 447 406 480 428 495 439 520 440 560 437 582 426 606 419"/>
<path id="rimR" d="M834 360l83 65c12 8 9 18 4 26L888 494C878 508 850 512 830 514 790 518 755 518 738 508 720 498 712 475 707 450"/>
</defs>
<path d="M482 254 378 388 864 529 967 397z" fill="#a9b8bd"/>
<path d="M482 254 378 388 454 410 485 371z" fill="#b5c7cc"/>
<path d="M485 371 454 410 864 529 893 492z" fill="#cbdde4"/>
<path d="M378 388 864 529 866 643 382 501z" fill="#929d9f"/>
<path d="M378 388 454 410 382 501z" fill="#858d92"/>
<path d="M864 529 967 397 970 511 866 643z" fill="#959fa2"/>
<path d="M864 529 967 397 970 511 893 492z" fill="url(#right)"/>
<path d="M454 410 382 501" stroke="#656f73" stroke-width=".8"/>
<!-- left lens: outer wall, then inside -->
<path d="M423 395 411 440 418 447 448 450C475 455 490 470 510 473 540 474 580 463 605 453L590 420 447 400z" fill="url(#dark1)"/>
<path d="M600 420C630 405 655 390 673 391L681 397 682 413C660 428 630 443 605 453L570 444 545 437z" fill="#9db0b7"/>
<path d="M422 362C430 345 450 325 465 317 478 308 490 303 500 302L616 295 660 320C690 330 692 350 690 362L673 380C640 357 590 350 550 349 520 352 500 362 493 373L482 424C500 436 520 438 447 405L427 385z" fill="url(#wall)"/>
<path d="M493 373C503 362 520 352 545 349 595 347 640 358 671 379L673 391 620 406 610 408z" fill="#9dabb1"/>
<path d="M482 418 545 437 520 440 495 434z" fill="#84918f"/>
<path d="M493 373 616 408 575 428 548 437 482 418z" fill="#cbdde4"/>
<path d="M493 373 614 408" stroke="#8b999f" stroke-width=".8"/>
<use href="#rimL" fill="none" stroke="#a9bcc2" stroke-width="8"/>
<use href="#rimL" fill="none" stroke="#c3d5da" stroke-width="3"/>
<g clip-path="url(#frontc)"><use href="#rimL" fill="none" stroke="#7f8d90" stroke-width="8"/><use href="#rimL" fill="none" stroke="#97a5a8" stroke-width="3"/></g>
<path d="M442 392C452 370 470 350 480 343 490 336 500 336 520 336 560 336 600 344 625 351 650 361 665 368 675 375M453 403C463 385 476 370 487 364" fill="none" stroke="#dbeaf0" stroke-width="2.500"/>
<path d="M550 436C575 432 590 426 606 420" stroke="#dcecf2" stroke-width="5" fill="none"/>
<path d="M600 415l10-5 20-1 30-16 13-4-2-5-12 4-44 22z" fill="#b3c7cc"/>
<path d="M558 316l39 6v5l-39-5z" fill="#a6b7bd" stroke="#b9cad0" stroke-width=".8"/><path d="M558 321l36 5M435 374l13-18" stroke="#e2f0f4" stroke-width="2.200"/>
<path d="M500 302v35M467 317l8 30 4 28M600 299v40M482 254l1 50M487 364l4 30M416 400l-2 40M427 405l3 42" stroke="#7f9096" stroke-width=".8" fill="none"/>
<path d="M616 296l25 22" stroke="#ddecf1" stroke-width="2.500"/>
<!-- bridge -->
<path d="M681 337l14 4 43 18-5 12C715 370 712 400 710 448L694 437 681 397 673 391 690 365z" fill="#bfd6d6"/>
<path d="M692 348l42 17" stroke="#869aa0" stroke-width="4"/><path d="M694 344l44 15" stroke="#def0f1" stroke-width="2"/>
<path d="M682 382c12-10 26-8 28 10l-2 54-14-9-13-40z" fill="#b9ced3" stroke="#8fa3a9" stroke-width=".8"/>
<!-- right lens -->
<path clip-path="url(#frontc)" d="M704 448C706 490 715 540 735 539 760 543 790 545 820 557L864 571V529L832 500 738 490 713 440z" fill="url(#dark2)"/>
<path d="M864 529 922 452 927 497 893 532 866 572z" fill="#727f84"/>
<path d="M712 450C710 400 715 380 722 372 735 364 748 360 758 359L810 367 834 360 917 425C928 433 926 443 922 450L888 490 868 508C840 512 780 518 745 510L722 490z" fill="url(#wall)"/>
<path d="M724 440C722 418 732 407 752 406 810 405 880 432 901 474L890 487 727 440z" fill="#9dabb0"/>
<path d="M724 439 889 487 868 508 800 514 745 510 728 490z" fill="#cbdde4"/>
<path d="M734 492 800 511 770 512 745 507z" fill="#8b989a"/>
<path d="M724 439 889 487" stroke="#8b999f" stroke-width=".8"/>
<path d="M720 440C720 415 730 397 752 396 790 397 845 413 870 427 890 438 905 450 911 461" fill="none" stroke="#dcebf0" stroke-width="3"/>
<path d="M721 438C719 465 722 485 735 500M713 420C708 450 712 475 722 490" fill="none" stroke="#d7e7ec" stroke-width="2.500"/>
<path d="M712 398C704 425 706 455 712 480M717 410C712 445 714 470 727 492" fill="none" stroke="#8499a0" stroke-width=".8"/>
<use href="#rimR" fill="none" stroke="#b0c3c9" stroke-width="7"/>
<use href="#rimR" fill="none" stroke="#d5e5e9" stroke-width="2"/>
<g clip-path="url(#frontc)"><use href="#rimR" fill="none" stroke="#7f8d90" stroke-width="7"/><use href="#rimR" fill="none" stroke="#9ba9ab" stroke-width="2.500"/></g>
<path d="M866 572 893 532C905 518 918 500 934 500 944 504 948 516 940 535L921 529C908 545 901 565 899 585z" fill="#838e92" stroke="#5d676b" stroke-width=".8"/>
<path d="M899 585C900 560 912 530 928 522 938 518 944 525 940 535L920 530C908 545 903 565 899 585z" fill="#6a757a"/>
<path d="M903 570C906 545 918 526 930 524 922 532 910 550 903 570z" fill="#96a1a4"/>
<path d="M892 492v40M927 455v42l8 6M893 532l17 14M880 555l22 14" stroke="#5c676c" stroke-width="1" fill="none"/>
<path d="M849 399l27 14" stroke="#d4e4e9" stroke-width="2"/><path d="M758 360v36M842 369v32M916 426l-4 34M849 396v-5l27 16v5" stroke="#8598a0" stroke-width=".8" fill="none"/>
<!-- stock edges -->
<path d="M482 254 378 388 864 529 967 397zM378 388 382 501 866 643 970 511 967 397M864 529 866 643" fill="none" stroke="#596164" stroke-width="1"/>
<!-- axes -->
<path d="M673 391V345" stroke="#2438a0" stroke-width="2"/><path d="M672 337l4 13h-8z" fill="#1b2f94"/>
<path d="M673 391l24-30" stroke="#2c7a3c" stroke-width="1.500"/><path d="M702 355l-3 9-5-4z" fill="#1c5f2c"/>
<path d="M673 391l50 15" stroke="#c03a3a" stroke-width="1.500"/><path d="M734 408l-13 1 2-7z" fill="#b32b2b"/>
<g font-size="8" font-family="Open Sans, sans-serif"><text x="674" y="337" fill="#4050d8">ZM</text><text x="691" y="351" fill="#3a9150">YM</text><text x="722" y="418" fill="#d35a60">XM</text>
<path d="M262 626l8-4 9 4v16l-8 4-9-5z" fill="#d2d5d5" stroke="#b8bcbc"/><path d="M258 644v-18" stroke="#24349c" stroke-width="2"/><path d="M257.500 620l3 8h-6z" fill="#24349c"/><path d="M258 644l18 5" stroke="#b5493f" stroke-width="2"/><path d="M282 650l-8 1 2-5z" fill="#b5493f"/><circle cx="258" cy="644" r="2" fill="#ddd" stroke="#888"/><text x="254" y="623" fill="#4050b8">Z</text><text x="281" y="654" fill="#d37a76">X</text></g>
</svg>
</main>
</div>
<aside class="rtools flex-shrink-0 d-flex flex-column align-items-center pt-2">
<button aria-label="Wireframe"><svg width="22" height="22"><use href="#wcube"/></svg></button>
<button class="mt-2" aria-label="Table"><svg width="20" height="20"><use href="#wtab"/></svg></button>
<svg class="mt-auto mb-1 me-3" width="4" height="6"><path d="M4 0v6L0 3z" fill="#222"/></svg>
</aside>
</div>

<footer class="status d-flex flex-shrink-0 align-items-center">
<div style="flex:1;padding-left:2px">Specify parameters</div><div class="text-center ps-5">Generating Tool Path</div><div style="flex:1" class="d-flex justify-content-end gap-2 pe-3"><svg width="11" height="10" viewBox="0 0 11 10"><path d="M1 1l9 8M10 1L1 9" stroke="#aaa"/><rect x="3" y="3" width="5" height="4" fill="#ccc" stroke="#666"/></svg><svg class="me-1" width="10" height="10" viewBox="0 0 10 10"><circle cx="5" cy="5.500" r="4.500" fill="#2c9480"/><path d="M1 2l4 2 3-3v4z" fill="#223"/></svg></div>
</footer>
<div class="band-b flex-shrink-0"></div>
<div class="foot flex-shrink-0"></div>
</div>
<div class="edge-r flex-shrink-0"></div>

<section class="dlg" aria-label="Imachining 3D">
<h1 class="d-flex align-items-center px-1"><svg class="ms-1" width="10" height="10"><use href="#gear"/></svg><span class="flex-grow-1 text-nowrap ps-1">Imachining 3D - [IMACHINING_3D]</span><button aria-label="Close dialog"><svg width="9" height="9" viewBox="0 0 9 9"><path d="M1 1l7 7M8 1L1 8" stroke="#fff" stroke-width="1.800"/></svg></button></h1>
<div class="frow" style="padding-top:5px"><label for="tl">Tool</label><span class="pick"><select id="tl"><option>MILL (Milling Tool)</option></select></span><button class="sq" aria-label="New tool"><svg width="22" height="22"><use href="#drill"/></svg></button><button class="sq" aria-label="Edit tool"><svg width="22" height="22"><use href="#toolwrench"/></svg></button></div>
<div class="frow"><label for="ge">Geometry</label><span class="pick"><select id="ge"><option>WORKPIECE</option></select></span><button class="sq" aria-label="New geometry"><svg width="22" height="22"><use href="#cubeball"/></svg></button><button class="sq" aria-label="Edit geometry"><svg width="22" height="22"><use href="#wrench"/></svg></button></div>
<div class="panel" style="height:71px"><h2 class="d-flex justify-content-between align-items-center">Settings<svg width="10" height="8"><use href="#up"/></svg></h2>
<div class="d-flex align-items-center" style="height:20px"><input type="checkbox" id="ust"><label for="ust" style="padding-left:2px">Use Selected Tool</label></div>
<div class="d-flex align-items-center justify-content-between"><span class="t">User Parameters</span><button class="sq" aria-label="Edit parameters"><svg width="22" height="22"><use href="#handlist"/></svg></button></div></div>
<div class="panel" style="height:72px"><h2 class="d-flex justify-content-between align-items-center">Description<svg width="10" height="8"><use href="#up"/></svg></h2>
<input class="desc d-block" style="margin-top:3px" type="text" aria-label="Description"><div class="t" style="padding-top:8px">Note</div></div>
<div class="panel" style="height:82px"><h2>Opt</h2><div class="t" style="padding-top:10px">Edit</div><div class="t" style="padding-top:15px">Cust</div></div>
<div class="panel mb-0" style="height:53px"><h2 class="d-flex justify-content-between align-items-center">Actions<svg width="10" height="8"><use href="#up"/></svg></h2>
<div class="d-flex justify-content-center" style="gap:2px;padding-top:3px"><button class="sq bg-white" aria-label="Generate"><svg width="20" height="20"><use href="#op"/></svg></button><button class="sq bg-white opacity-75" aria-label="Replay"><svg width="20" height="20"><use href="#regen"/></svg></button><button class="sq bg-white opacity-50" aria-label="Verify"><svg width="22" height="22"><use href="#vbox"/></svg></button><button class="sq bg-white opacity-75" aria-label="List"><svg width="22" height="22" viewBox="0 0 24 24"><path d="M9 2H3v5h6v5H3M9 12v5H3v5h6" fill="none" stroke="#aaa" stroke-width="1.400"/><path d="M12 10l3-3v-3h3v3l4 3v12H12z" fill="#aaa"/></svg></button></div></div>
<div class="d-flex justify-content-end" style="gap:3px;padding:12px 10px 6px"><button class="okb">OK</button><button class="cab">Cancel</button></div>
</section>

<section class="prog" aria-label="Tool path calculation">
<div class="cap"></div>
<div class="line d-flex justify-content-between" style="padding:6px 16px 0 10px"><span>Tool path calculation/Z-level No.</span><span>56</span></div>
<div class="d-flex justify-content-center align-items-end" style="height:38px;padding-right:7px"><span class="im-i">i</span><span class="im-t">machining</span></div>
<div class="text-center" style="padding:9px 5px 0 0"><button class="cbtn">Cancel</button></div>
</section>
<svg class="ptr" width="10" height="14" viewBox="0 0 10 14"><path d="M1 1v10l2.500-2 2 4 2-1-2-4H9z" fill="#fff" stroke="#333" stroke-width=".9"/></svg>
</div>
</body>
</html>
